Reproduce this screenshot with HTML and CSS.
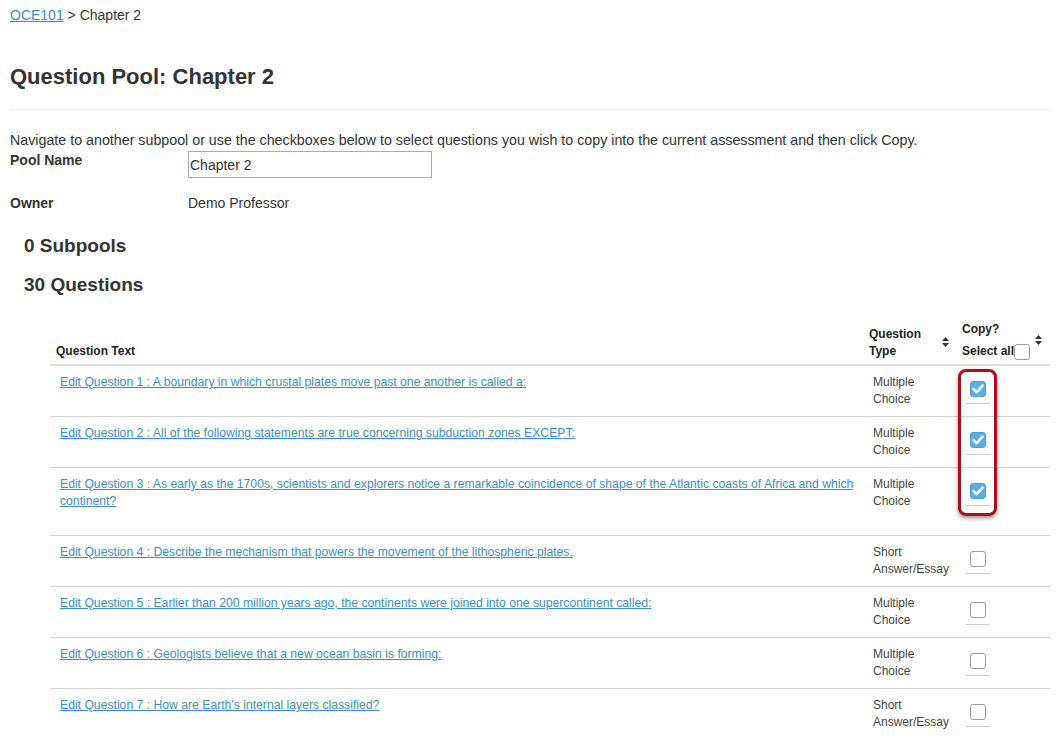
FILE: index.html
```html
<!DOCTYPE html>
<html lang="en">
<head>
<meta charset="utf-8">
<title>Question Pool: Chapter 2</title>
<link rel="stylesheet" href="styles.css">
</head>
<body>
<div class="page">
  <div class="crumbs"><a href="#" class="crumb-link">OCE101</a> &gt; Chapter 2</div>
  <h1 class="title">Question Pool: Chapter 2</h1>
  <hr class="rule">
  <p class="intro">Navigate to another subpool or use the checkboxes below to select questions you wish to copy into the current assessment and then click Copy.</p>
  <div class="field field-pool">
    <span class="field-label">Pool Name</span>
    <input class="field-input" type="text" value="Chapter 2">
  </div>
  <div class="field field-owner">
    <span class="field-label">Owner</span>
    <span class="field-value">Demo Professor</span>
  </div>
  <h2 class="section section-sub">0 Subpools</h2>
  <h2 class="section section-q">30 Questions</h2>

  <div class="table-wrap">
    <table class="qtable">
      <colgroup>
        <col class="col-text">
        <col class="col-type">
        <col class="col-copy">
      </colgroup>
      <thead>
        <tr>
          <th class="th-text">Question Text</th>
          <th class="th-type">
            <div class="th-inner">
              <span class="th-label">Question<br>Type</span>
              <svg class="sort" width="7" height="10" viewBox="0 0 7 10"><polygon points="0,4 3.5,0 7,4"/><polygon points="0,6 3.5,10 7,6"/></svg>
            </div>
          </th>
          <th class="th-copy">
            <div class="th-inner">
              <span class="th-label">
                <span class="copy-line">Copy?</span>
                <span class="select-line">Select all<span class="cb cb-head"></span></span>
              </span>
              <svg class="sort" width="7" height="10" viewBox="0 0 7 10"><polygon points="0,4 3.5,0 7,4"/><polygon points="0,6 3.5,10 7,6"/></svg>
            </div>
          </th>
        </tr>
      </thead>
      <tbody>
        <tr>
          <td class="td-text"><a href="#" class="q-link">Edit Question 1 : A boundary in which crustal plates move past one another is called a:</a></td>
          <td class="td-type">Multiple<br>Choice</td>
          <td class="td-copy"><div class="cb-wrap"><span class="cb cb-on"><svg width="16" height="16" viewBox="0 0 16 16"><path d="M3.6 8.2 L6.6 11.2 L12.6 4.6" fill="none" stroke="#fff" stroke-width="2.6" stroke-linecap="round" stroke-linejoin="round"/></svg></span></div></td>
        </tr>
        <tr>
          <td class="td-text"><a href="#" class="q-link">Edit Question 2 : All of the following statements are true concerning subduction zones EXCEPT:</a></td>
          <td class="td-type">Multiple<br>Choice</td>
          <td class="td-copy"><div class="cb-wrap"><span class="cb cb-on"><svg width="16" height="16" viewBox="0 0 16 16"><path d="M3.6 8.2 L6.6 11.2 L12.6 4.6" fill="none" stroke="#fff" stroke-width="2.6" stroke-linecap="round" stroke-linejoin="round"/></svg></span></div></td>
        </tr>
        <tr>
          <td class="td-text"><a href="#" class="q-link">Edit Question 3 : As early as the 1700s, scientists and explorers notice a remarkable coincidence of shape of the Atlantic coasts of Africa and which continent?</a></td>
          <td class="td-type">Multiple<br>Choice</td>
          <td class="td-copy"><div class="cb-wrap"><span class="cb cb-on"><svg width="16" height="16" viewBox="0 0 16 16"><path d="M3.6 8.2 L6.6 11.2 L12.6 4.6" fill="none" stroke="#fff" stroke-width="2.6" stroke-linecap="round" stroke-linejoin="round"/></svg></span></div></td>
        </tr>
        <tr>
          <td class="td-text"><a href="#" class="q-link">Edit Question 4 : Describe the mechanism that powers the movement of the lithospheric plates.</a></td>
          <td class="td-type">Short<br>Answer/Essay</td>
          <td class="td-copy"><div class="cb-wrap"><span class="cb"></span></div></td>
        </tr>
        <tr>
          <td class="td-text"><a href="#" class="q-link">Edit Question 5 : Earlier than 200 million years ago, the continents were joined into one supercontinent called:</a></td>
          <td class="td-type">Multiple<br>Choice</td>
          <td class="td-copy"><div class="cb-wrap"><span class="cb"></span></div></td>
        </tr>
        <tr>
          <td class="td-text"><a href="#" class="q-link">Edit Question 6 : Geologists believe that a new ocean basin is forming:</a></td>
          <td class="td-type">Multiple<br>Choice</td>
          <td class="td-copy"><div class="cb-wrap"><span class="cb"></span></div></td>
        </tr>
        <tr>
          <td class="td-text"><a href="#" class="q-link">Edit Question 7 : How are Earth's internal layers classified?</a></td>
          <td class="td-type">Short<br>Answer/Essay</td>
          <td class="td-copy"><div class="cb-wrap"><span class="cb"></span></div></td>
        </tr>
      </tbody>
    </table>
    <div class="highlight"></div>
  </div>
</div>
</body>
</html>
```

FILE: styles.css
```css
html, body {
  margin: 0;
  padding: 0;
  background: #fff;
}

body {
  font-family: "Liberation Sans", Arial, sans-serif;
  color: #333;
  font-size: 14px;
}

.page {
  padding: 5px 12px 0 10px;
}

.crumbs {
  font-size: 14px;
  line-height: 20px;
}

.crumb-link {
  color: #3a8fc7;
  text-decoration: underline;
}

.title {
  margin: 37px 0 0;
  font-size: 22px;
  line-height: 30px;
  font-weight: bold;
  color: #333;
}

.rule {
  margin: 17px 0 0;
  border: 0;
  border-top: 1px solid #eee;
  height: 0;
}

.intro {
  margin: 20px 0 0;
  font-size: 14.25px;
  line-height: 20px;
}

.field {
  display: flex;
  align-items: flex-start;
}

.field-pool {
  margin-top: 1px;
}

.field-owner {
  margin-top: 16px;
}

.field-label {
  width: 178px;
  flex: none;
  font-weight: bold;
  font-size: 14px;
  line-height: 18px;
}

.field-input {
  box-sizing: border-box;
  width: 244px;
  height: 27px;
  margin: 0;
  padding: 0 1px;
  border: 1px solid #aaa;
  font-family: "Liberation Sans", Arial, sans-serif;
  font-size: 14px;
  color: #333;
}

.field-value {
  font-size: 14px;
  line-height: 18px;
}

.section {
  margin: 0;
  padding-left: 14px;
  font-size: 19px;
  line-height: 24px;
  font-weight: bold;
  color: #333;
}

.section-sub {
  margin-top: 22px;
}

.section-q {
  margin-top: 15px;
}

.table-wrap {
  position: relative;
  margin: 24px 0 0 40px;
}

.qtable {
  width: 1000px;
  border-collapse: collapse;
  table-layout: fixed;
  font-size: 12px;
}

.col-text { width: 815px; }
.col-type { width: 90px; }
.col-copy { width: 95px; }

.qtable th {
  text-align: left;
  vertical-align: bottom;
  font-weight: bold;
  color: #222;
  line-height: 17px;
  border-bottom: 2px solid #ddd;
  padding: 0 0 4px;
}

.th-text {
  padding-left: 6px !important;
}

.th-type {
  padding-left: 4px !important;
  padding-right: 6px !important;
}

.th-copy {
  padding-left: 7px !important;
  padding-right: 8px !important;
}

.th-inner {
  display: flex;
  align-items: center;
  justify-content: space-between;
}

.th-label {
  display: block;
}

.copy-line {
  display: block;
  line-height: 17px;
  margin-bottom: 5px;
}

.select-line {
  display: flex;
  align-items: center;
  line-height: 17px;
}

.sort {
  fill: #333;
  flex: none;
  margin-top: -2px;
}

.qtable td {
  vertical-align: top;
  border-bottom: 1px solid #d2d2d2;
  line-height: 17px;
}

.td-text {
  padding: 8px 10px 25px;
}

.q-link {
  font-size: 12.2px;
  color: #3a8fc7;
  text-decoration: underline;
}

.td-type {
  padding: 8px 4px 0 8px;
  color: #444;
}

.td-copy {
  padding: 15px 0 0 11px;
}

.cb-wrap {
  width: 24px;
  padding-bottom: 6px;
  border-bottom: 1px solid #ccc;
  display: flex;
  justify-content: center;
}

.cb {
  box-sizing: border-box;
  display: block;
  width: 16px;
  height: 16px;
  border: 1px solid #9a9a9a;
  border-radius: 3px;
  background: #fff;
}

.cb svg {
  display: block;
  margin: -1px;
}

.cb-on {
  background: #5eaee3;
  border-color: #4c9fd8;
}

.cb-head {
  width: 16px;
  height: 16px;
  margin-left: 0;
}

.highlight {
  position: absolute;
  left: 908px;
  top: 48px;
  width: 39px;
  height: 147px;
  box-sizing: border-box;
  border: 3px solid #a6111a;
  border-radius: 8px;
  box-shadow: 0 2px 4px rgba(0, 0, 0, 0.45);
  pointer-events: none;
}
```
